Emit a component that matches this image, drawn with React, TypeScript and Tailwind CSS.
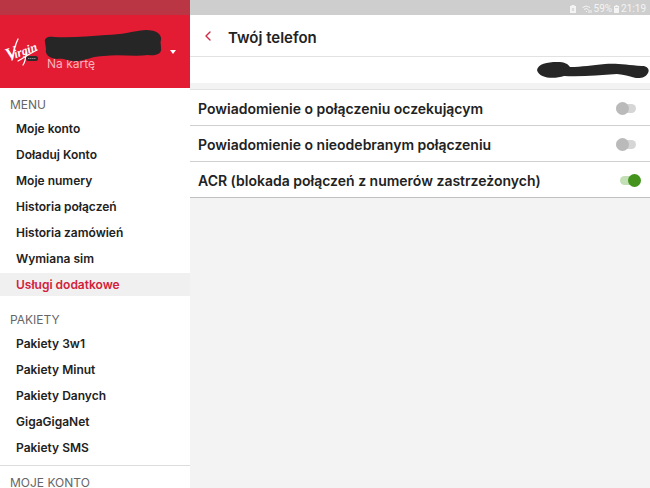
import { useState } from "react";
import { ChevronLeft } from "lucide-react";

const menuSections = [
  {
    title: "MENU",
    items: [
      "Moje konto",
      "Doładuj Konto",
      "Moje numery",
      "Historia połączeń",
      "Historia zamówień",
      "Wymiana sim",
      "Usługi dodatkowe",
    ],
  },
  {
    title: "PAKIETY",
    items: [
      "Pakiety 3w1",
      "Pakiety Minut",
      "Pakiety Danych",
      "GigaGigaNet",
      "Pakiety SMS",
    ],
  },
  { title: "MOJE KONTO", items: [] },
];

const services = [
  { id: "waiting", label: "Powiadomienie o połączeniu oczekującym", on: false },
  { id: "missed", label: "Powiadomienie o nieodebranym połączeniu", on: false },
  { id: "acr", label: "ACR (blokada połączeń z numerów zastrzeżonych)", on: true },
];

const VirginLogo = () => (
  <svg viewBox="0 0 36 32" className="h-8 w-9 shrink-0 overflow-visible" role="img" aria-label="Virgin Mobile">
    <g transform="rotate(-20 4 22)" fill="#fff" fontFamily="Liberation Serif, serif" fontStyle="italic" fontWeight="700">
      <text x="1" y="24" fontSize="18">V</text>
      <text x="9" y="24" fontSize="12">irgin</text>
    </g>
    <path d="M6 24C7 18 9 9 12 3" stroke="#fff" strokeWidth="1.3" strokeLinecap="round" fill="none" />
    <path d="M20 16C20 22 19 26 17 29M12 25C17 22 25 17 31 14" stroke="#fff" strokeWidth="1.2" strokeLinecap="round" fill="none" />
    <rect x="20" y="20" width="12" height="5" rx="2.5" fill="#2b2b2b" />
    <path d="M22 22.5h8" stroke="#8a8a8a" strokeDasharray="1.5 0.5" />
  </svg>
);

const StatusBar = () => (
  <div className="flex h-[15px] shrink-0 items-center justify-end gap-0.5 bg-[#cecece] pt-0.5 pr-1 font-['Roboto',sans-serif] text-[10px] leading-3 text-[#f4f4f4]">
    <svg viewBox="0 0 6 8" className="mr-1 h-2 w-1.5" fill="#f4f4f4">
      <path d="M0 1h1.5V0h3v1H6v7H0z" />
      <path d="M2 3l2 3M4 3L2 6" stroke="#cecece" strokeWidth="0.8" />
    </svg>
    <svg viewBox="0 0 10 8" className="h-2 w-2.5" fill="none" stroke="#f4f4f4">
      <path d="M0.5 2.5Q4-0.5 8 2.5M2 4.5Q4 2.5 6.5 4.5M4 6l1 1M9 5v3M7 5v3" />
    </svg>
    <span>59%</span>
    <svg viewBox="0 0 5 8" className="h-2 w-[5px]" fill="#f4f4f4">
      <path d="M0 1h1.5V0h2v1H5v7H0z" />
      <path d="M1 2.5h3" stroke="#cecece" strokeWidth="0.8" />
    </svg>
    <span>21:19</span>
  </div>
);

const App = () => {
  const [active, setActive] = useState("Usługi dodatkowe");
  const [enabled, setEnabled] = useState<Record<string, boolean>>(
    Object.fromEntries(services.map((s) => [s.id, s.on]))
  );

  return (
    <div className="flex h-screen overflow-hidden bg-[#f3f3f3] font-['Inter',sans-serif] text-[#222]">
      <aside className="flex w-[190px] shrink-0 flex-col bg-white">
        <div className="h-[15px] shrink-0 bg-[#bb3645]" />
        <div className="flex h-[73px] shrink-0 items-center bg-[#e31b33] pl-1.5">
          <VirginLogo />
          <div className="relative h-10 flex-1">
            <p className="absolute bottom-0 left-[5px] text-[12px] leading-4 text-[#f7b3ba]">Na kartę</p>
            <svg viewBox="0 0 120 34" className="absolute -top-0.5 left-0.5 h-[34px] w-[120px]" fill="#262626">
              <path d="M1 12C0 8 4 6 10 7C30 8 45 6 62 5C78 5 88 1 102 0C112 0 118 4 117 10C116 12 117 14 117 18C118 24 112 26 104 25C90 27 76 24 60 26C48 26 44 30 34 31C25 32 21 28 13 29C4 28 1 24 2 19Z" />
            </svg>
          </div>
          <button aria-label="Zmień numer" className="mr-3 p-0.5">
            <svg viewBox="0 0 6 4" className="h-1 w-1.5" fill="#fff">
              <path d="M0 0h6L3 4z" />
            </svg>
          </button>
        </div>
        <nav className="flex-1 overflow-hidden">
          {menuSections.map((section, i) => (
            <section
              key={section.title}
              className={`border-b pt-[5px] pb-1.5 ${i === 1 ? "border-[#ddd]" : "border-transparent"}`}
            >
              <h2 className="pl-2.5 text-[12px] leading-6 text-[#666]">{section.title}</h2>
              <ul className="flex flex-col gap-[3px]">
                {section.items.map((item) => (
                  <li key={item}>
                    <a
                      href="#"
                      onClick={() => setActive(item)}
                      className={`block pl-4 text-[12px] leading-[23px] font-semibold ${
                        active === item ? "bg-[#f0f0f0] text-[#d3213b]" : ""
                      }`}
                    >
                      {item}
                    </a>
                  </li>
                ))}
              </ul>
            </section>
          ))}
        </nav>
      </aside>

      <main className="flex min-w-0 flex-1 flex-col">
        <StatusBar />
        <header className="flex h-[42px] shrink-0 items-center border-b border-[#e2e2e2] bg-white pl-2.5">
          <button aria-label="Wstecz" className="text-[#cf2a45]">
            <ChevronLeft size={16} strokeWidth={2} />
          </button>
          <h1 className="pt-1 pl-3 text-[15px] leading-5 font-semibold">Twój telefon</h1>
        </header>
        <div className="flex h-[26px] shrink-0 justify-end bg-white pr-px">
          <svg viewBox="0 0 112 18" className="mt-1 h-[18px] w-28" fill="#262626">
            <path d="M0 9C1 3 10 1 20 1C28 1 31 3 33 6C45 6 55 4 68 3C80 2 90 4 105 5C110 5 113 8 111 12C108 17 104 17 99 17C93 16 91 14 80 13C62 14 45 16 27 15C18 18 2 18 0 9Z" />
          </svg>
        </div>
        <ul className="mt-1.5 border-t border-b border-t-[#e2e2e2] border-b-[#c0c0c0] bg-white">
          {services.map((service) => (
            <li key={service.id} className="border-b border-[#d0d0d0] last:border-b-0">
              <label className="flex h-[35px] items-center justify-between pt-0.5 pr-2.5 pl-2 text-[14px] font-semibold">
                {service.label}
                <input
                  type="checkbox"
                  role="switch"
                  checked={enabled[service.id]}
                  onChange={(e) => setEnabled({ ...enabled, [service.id]: e.target.checked })}
                  className="relative mr-1 h-[9px] w-5 shrink-0 appearance-none rounded-full bg-[#d6d6d6] before:absolute before:-top-0.5 before:left-0 before:size-[13px] before:rounded-full before:bg-[#bababa] checked:mr-0 checked:bg-[#c3dfb6] checked:before:left-2 checked:before:bg-[#43931d]"
                />
              </label>
            </li>
          ))}
        </ul>
      </main>
    </div>
  );
};

export default App;
